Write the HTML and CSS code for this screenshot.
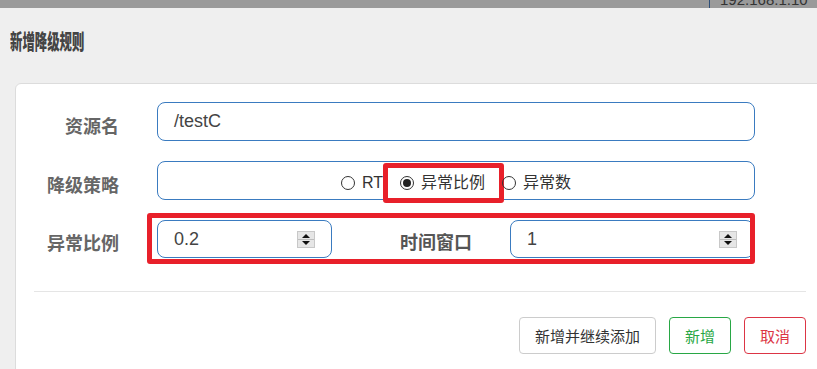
FILE: index.html
```
<!DOCTYPE html>
<html lang="zh-CN">
<head>
    <meta charset="UTF-8">
    <title>新增降级规则</title>
    <link rel="stylesheet" href="styles.css">
</head>
<body>
    <div class="topbar">
        <div class="host">192.168.1.10</div>
    </div>

    <div class="modal">
        <div class="modal-title"><span>新增降级规则</span></div>

        <div class="panel">
            <!-- 资源名 -->
            <div class="row">
                <label class="row-label">资源名</label>
                <div class="field wide"><span class="value">/testC</span></div>
            </div>

            <!-- 降级策略 -->
            <div class="row">
                <label class="row-label">降级策略</label>
                <div class="field wide radios">
                    <span class="opt"><span class="dot"></span>RT</span>
                    <span class="opt picked"><span class="dot on"></span>异常比例</span>
                    <span class="opt"><span class="dot"></span>异常数</span>
                </div>
            </div>

            <!-- 异常比例 / 时间窗口 -->
            <div class="row">
                <label class="row-label">异常比例</label>
                <div class="pair">
                    <div class="field small">
                        <span class="value">0.2</span>
                        <svg class="spin" width="18" height="17" viewBox="0 0 18 17">
                            <rect x="0.5" y="0.5" width="17" height="16" fill="#e6e6e6" stroke="#c8c8c8"/>
                            <line x1="1" y1="8.5" x2="17" y2="8.5" stroke="#bdbdbd"/>
                            <path d="M9 3 L13 7 L5 7 Z" fill="#111"/>
                            <path d="M9 14 L13 10 L5 10 Z" fill="#111"/>
                        </svg>
                    </div>
                    <label class="row-label mid">时间窗口</label>
                    <div class="field window">
                        <span class="value">1</span>
                        <svg class="spin" width="18" height="17" viewBox="0 0 18 17">
                            <rect x="0.5" y="0.5" width="17" height="16" fill="#e6e6e6" stroke="#c8c8c8"/>
                            <line x1="1" y1="8.5" x2="17" y2="8.5" stroke="#bdbdbd"/>
                            <path d="M9 3 L13 7 L5 7 Z" fill="#111"/>
                            <path d="M9 14 L13 10 L5 10 Z" fill="#111"/>
                        </svg>
                    </div>
                </div>
            </div>

            <div class="divider"></div>

            <div class="footer">
                <button class="btn">新增并继续添加</button>
                <button class="btn btn-ok">新增</button>
                <button class="btn btn-cancel">取消</button>
            </div>
        </div>
    </div>
</body>
</html>
```

FILE: styles.css
```
html, body {
    margin: 0;
    height: 100%;
    overflow: hidden;
}
body {
    font-family: "Liberation Sans", "Noto Sans CJK SC", sans-serif;
    background: #efefef;
    color: #333;
}
.topbar {
    height: 8px;
    background: #9a9a9a;
    overflow: hidden;
}
.host {
    margin-left: 709px;
    border-left: 1px solid #2f4f78;
    padding-left: 10px;
    font-size: 15px;
    line-height: 15px;
    margin-top: -8px;
    color: #333;
    height: 16px;
}
.modal {
    background: #efefef;
}
.modal-title {
    padding: 21px 0 0 10px;
    height: 33px;
    margin-bottom: 21px;
}
.modal-title span {
    display: inline-block;
    font-size: 21px;
    line-height: 26px;
    font-weight: 900;
    color: #444;
    transform: scaleX(0.59);
    transform-origin: left center;
}
.panel {
    margin-left: 15px;
    width: 900px;
    height: 400px;
    background: #fff;
    border: 1px solid #dcdcdc;
    border-radius: 6px 0 0 0;
    padding-top: 18px;
}
.row {
    display: flex;
    align-items: center;
    margin-bottom: 20px;
}
.row-label {
    width: 103px;
    margin-right: 38px;
    text-align: right;
    font-size: 18px;
    font-weight: bold;
    color: #666;
    padding-top: 6px;
}
.field {
    box-sizing: border-box;
    height: 39px;
    border: 1px solid #3a7bc0;
    border-radius: 8px;
    display: flex;
    align-items: center;
    padding: 0 16px;
    font-size: 18px;
    color: #444;
}
.field .value {
    flex: 1;
}
.wide {
    width: 598px;
}
.radios {
    justify-content: center;
    gap: 17px;
    font-size: 16px;
    color: #333;
    padding-top: 4px;
}
.opt {
    position: relative;
    display: flex;
    align-items: center;
    gap: 7px;
    line-height: 22px;
}
.picked::after {
    content: "";
    position: absolute;
    left: -17px;
    right: -19px;
    top: -9px;
    bottom: -9px;
    border: 5px solid #e8202a;
    border-radius: 3px;
}
.dot {
    box-sizing: border-box;
    width: 14px;
    height: 14px;
    border: 1px solid #333;
    border-radius: 50%;
    display: flex;
    align-items: center;
    justify-content: center;
}
.dot.on::before {
    content: "";
    width: 8px;
    height: 8px;
    border-radius: 50%;
    background: #222;
}
.pair {
    position: relative;
    display: flex;
    align-items: center;
    width: 597px;
}
.pair::after {
    content: "";
    position: absolute;
    left: -10px;
    right: -1px;
    top: -7px;
    bottom: -6px;
    border: 5px solid #e8202a;
    border-radius: 3px;
}
.small {
    width: 175px;
    height: 38px;
}
.mid {
    width: 140px;
    color: #555;
    padding-top: 4px;
}
.window {
    width: 244px;
    height: 38px;
}
.spin {
    display: block;
}
.divider {
    width: 772px;
    margin: 33px 0 0 18px;
    border-top: 1px solid #e5e5e5;
}
.footer {
    width: 772px;
    margin: 25px 0 0 18px;
    display: flex;
    justify-content: flex-end;
    gap: 13px;
}
.btn {
    height: 37px;
    padding: 0 15px;
    font-family: "Liberation Sans", "Noto Sans CJK SC", sans-serif;
    font-size: 15px;
    background: #fff;
    border: 1px solid #ccc;
    border-radius: 4px;
    color: #333;
}
.btn-ok {
    border-color: #28a745;
    color: #28a745;
}
.btn-cancel {
    border-color: #dc3545;
    color: #dc3545;
}
```
